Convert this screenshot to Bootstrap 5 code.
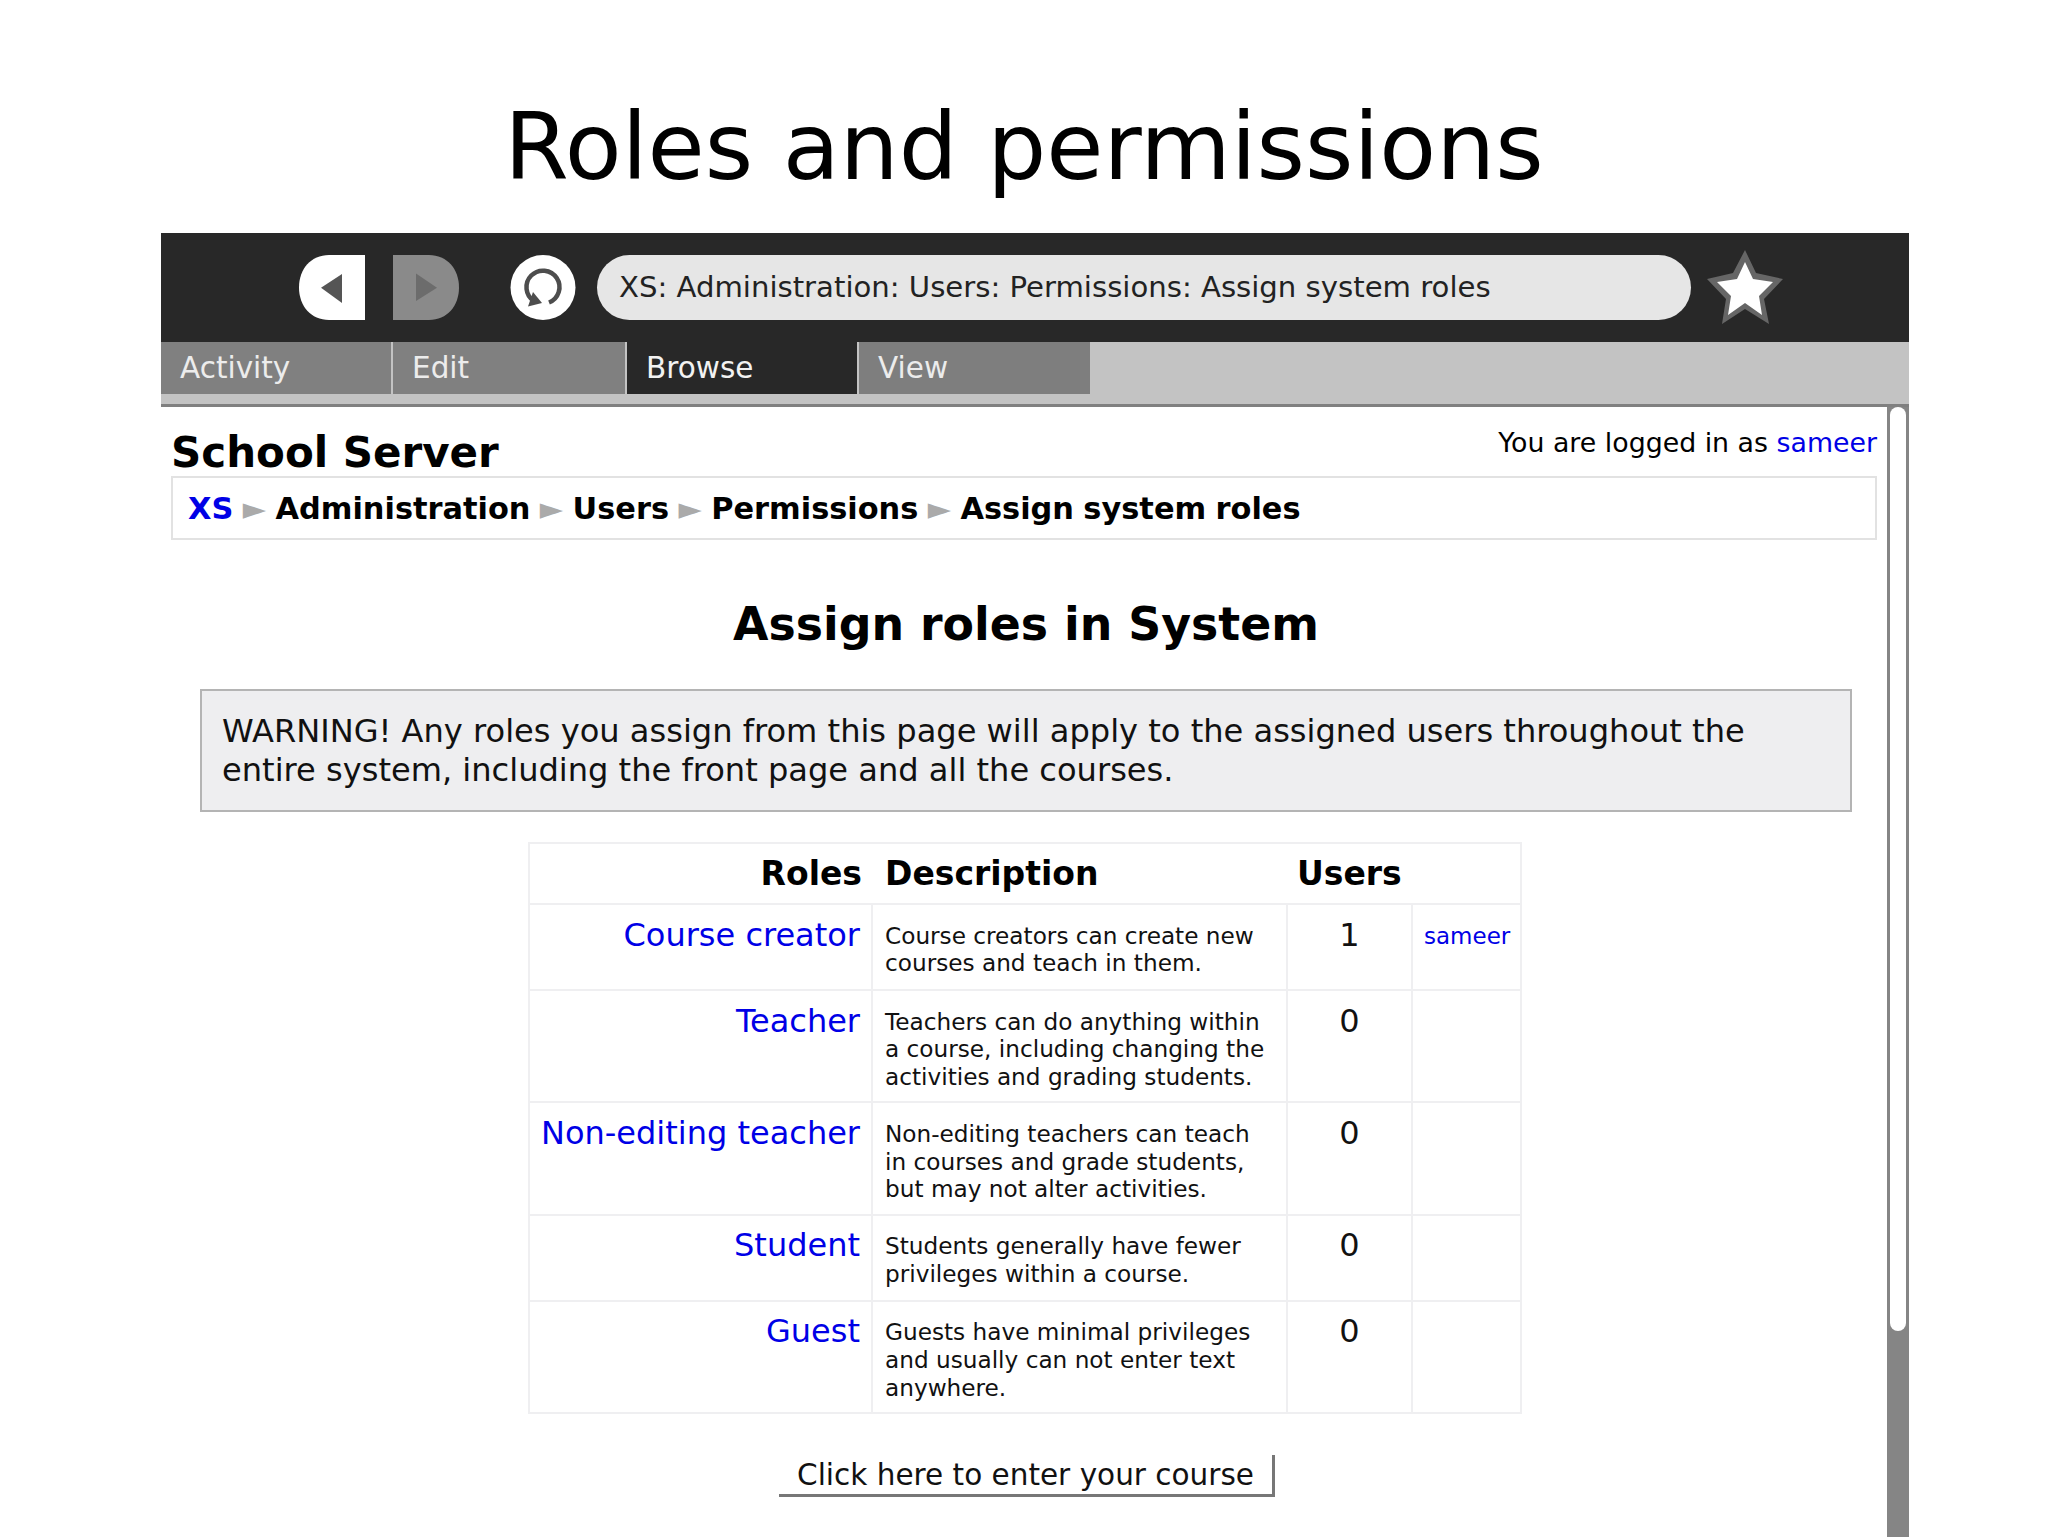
<!DOCTYPE html>
<html lang="en"><head><meta charset="utf-8"><title>Roles and permissions</title>
<link rel="stylesheet" href="https://cdn.jsdelivr.net/npm/bootstrap@5.3.0/dist/css/bootstrap.min.css">
<style>
html,body{height:100%;overflow:hidden}
body{font-family:"DejaVu Sans",sans-serif;color:#000;background:#fff}
a{color:#0000e6;text-decoration:none}
.slide-title{height:233px;font-size:93px;line-height:1;font-weight:400;margin:0;padding-top:101px;text-align:center}
.frame{margin-left:161px;width:1748px;height:1304px}
.toolbar{height:109px;background:#282828;padding-left:138px}
.nav-icon{width:66px;height:65px;flex:none;display:block}
.fwd{margin-left:28px}.reload{margin-left:51px}
.urlbar{width:1094px;height:65px;margin-left:21px;background:#e6e6e6;border-radius:33px;padding:1px 0 0 22px;font-size:29.15px;color:#222}
.star{width:78px;height:76px;margin:-2px 0 0 15px;flex:none}
.tabstrip{height:65px;background:#c3c3c3;border-bottom:3px solid #808080;padding-bottom:10px}
.tabstrip .nav-link{width:230px;height:52px;margin-right:2px;padding:6px 0 0 19px;font-size:29.5px;line-height:40px;background:#808080;color:#ececec}
.tabstrip .nav-item:nth-child(2) .nav-link{width:232px}
.tabstrip .nav-item:last-child .nav-link{width:231px;margin-right:0;background:#7e7e7e}
.tabstrip .nav-link.active{background:#282828;color:#f2f2f2}
.pagearea{min-height:0}
.mainpane{width:1726px;flex:none;padding:0 10px}
.rail{width:22px;flex:none;background:#858585;padding:0 3px 0 3px}
.thumb{height:924px;background:#fff;border-radius:8px}
.site-name{font-size:42px;font-weight:700;line-height:50px;margin:0;padding-top:1px}
.login{font-size:26.8px;line-height:36px;padding:0;margin-top:-2px}
.topline{height:69px;padding-top:20px}
.crumbs{height:64px;border:2px solid #e2e2e2;padding:0 0 0 15px;font-size:30.4px;word-spacing:-1.2px;font-weight:700;line-height:62px;margin:0;white-space:nowrap}
.crumbs .sep{color:#aaa;font-weight:400}
.page-head{font-size:45.8px;font-weight:700;line-height:54px;text-align:center;margin:57px 0 0;padding-left:4px}
.notice{margin:38px 25px 0 29px;height:123px;background:#eeeef0;border:2px solid #b4b4b4;padding:21px 16px 0 20px;font-size:32.1px;line-height:39px;color:#111}
.roles-table{width:992px;margin:30px 0 0 357px;border-collapse:collapse;table-layout:fixed;border:2px solid #efeff1}
.roles-table th{font-size:33px;font-weight:700;height:61px;padding:0 10px 0 13px;line-height:40px}
.roles-table th.text-center{padding:0 13px 0 10px}
.roles-table td{border:2px solid #efeff1;vertical-align:top;padding:16.500px 12px 11.200px;font-size:23.2px;line-height:27.6px;color:#111}
.roles-table tbody tr{height:86px}
.roles-table .role{font-size:32px;text-align:right;line-height:34px;padding:12.500px 11px 0 0;white-space:nowrap}
.roles-table .num{font-size:32px;text-align:center;line-height:34px;padding-top:12.500px}
.roles-table .who{font-size:23px;padding:17.500px 0 0 11px}
.enter-wrap{margin-top:41px;padding-left:608px}
.enter-btn{width:496px;height:42px;background:#fff;border:0;border-right:3px solid #777;border-bottom:3px solid #777;border-radius:0;padding:0;font-size:29.5px;line-height:36px;color:#111;text-align:center}
</style></head>
<body>
<h1 class="slide-title">Roles and permissions</h1>
<div class="frame d-flex flex-column">
  <div class="toolbar d-flex align-items-center">
    <svg class="nav-icon" viewBox="0 0 66 65"><path d="M66 0H30C12 0 0 14 0 32.500S12 65 30 65H66Z" fill="#fff"/><path d="M22 32.700 43 19V48Z" fill="#555"/></svg>
    <svg class="nav-icon fwd" viewBox="0 0 66 65"><path d="M0 0H36C54 0 66 14 66 32.500S54 65 36 65H0Z" fill="#8a8a8a"/><path d="M23 18.500 44 32.700 23 46Z" fill="#6c6c6c"/></svg>
    <svg class="nav-icon reload" viewBox="0 0 66 65"><circle cx="33" cy="32.500" r="32.500" fill="#fff"/><path d="M39 47.500A16.500 16.500 0 1 0 24 46" fill="none" stroke="#4d4d4d" stroke-width="4.500"/><path d="M18 51.500 23 37 32 48Z" fill="#4d4d4d"/></svg>
    <div class="urlbar d-flex align-items-center">XS: Administration: Users: Permissions: Assign system roles</div>
    <svg class="star" viewBox="0 0 78 76"><path d="M39 1 50 24 77 30 58 50 63 75 39 60 16 75 20 50 1 30 27 24Z" fill="#666"/><path d="M39 13 47 30 67 33 53 47 56 66 39 54 22 66 25 47 11 33 31 30Z" fill="#fff"/></svg>
  </div>
  <div class="tabstrip">
    <ul class="nav">
      <li class="nav-item"><a class="nav-link" href="#">Activity</a></li>
      <li class="nav-item"><a class="nav-link" href="#">Edit</a></li>
      <li class="nav-item"><a class="nav-link active" href="#">Browse</a></li>
      <li class="nav-item"><a class="nav-link" href="#">View</a></li>
    </ul>
  </div>
  <div class="pagearea d-flex flex-grow-1">
    <div class="mainpane">
      <div class="topline d-flex justify-content-between align-items-start">
        <h2 class="site-name">School Server</h2>
        <div class="login">You are logged in as <a href="#">sameer</a></div>
      </div>
      <div class="crumbs"><a href="#">XS</a> <span class="sep">►</span> Administration <span class="sep">►</span> Users <span class="sep">►</span> Permissions <span class="sep">►</span> Assign system roles</div>
      <h2 class="page-head">Assign roles in System</h2>
      <div class="notice">WARNING! Any roles you assign from this page will apply to the assigned users throughout the entire system, including the front page and all the courses.</div>
      <table class="roles-table">
        <colgroup><col style="width:343px"><col style="width:415px"><col style="width:125px"><col style="width:109px"></colgroup>
        <thead><tr><th class="text-end">Roles</th><th>Description</th><th class="text-center">Users</th><th></th></tr></thead>
        <tbody>
          <tr><td class="role"><a href="#">Course creator</a></td><td>Course creators can create new courses and teach in them.</td><td class="num">1</td><td class="who"><a href="#">sameer</a></td></tr>
          <tr><td class="role"><a href="#">Teacher</a></td><td>Teachers can do anything within a course, including changing the activities and grading students.</td><td class="num">0</td><td></td></tr>
          <tr><td class="role"><a href="#">Non-editing teacher</a></td><td>Non-editing teachers can teach in courses and grade students, but may not alter activities.</td><td class="num">0</td><td></td></tr>
          <tr><td class="role"><a href="#">Student</a></td><td>Students generally have fewer privileges within a course.</td><td class="num">0</td><td></td></tr>
          <tr><td class="role"><a href="#">Guest</a></td><td>Guests have minimal privileges and usually can not enter text anywhere.</td><td class="num">0</td><td></td></tr>
        </tbody>
      </table>
      <div class="enter-wrap"><button type="button" class="btn enter-btn">Click here to enter your course</button></div>
    </div>
    <div class="rail"><div class="thumb"></div></div>
  </div>
</div>
<script src="https://cdn.jsdelivr.net/npm/bootstrap@5.3.0/dist/js/bootstrap.bundle.min.js"></script>
</body></html>
